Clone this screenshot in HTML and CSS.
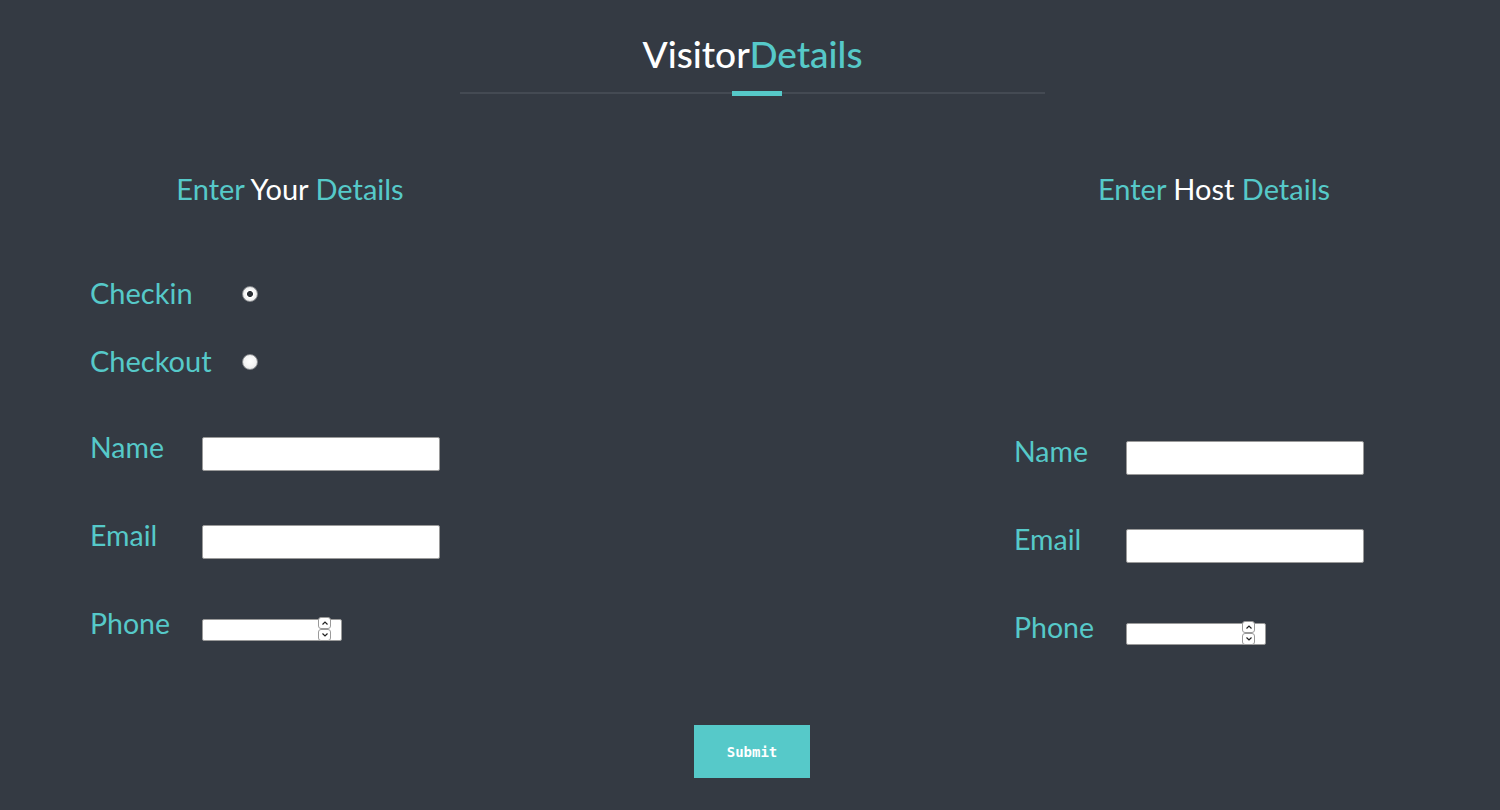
FILE: index.html
```html
<!DOCTYPE html>
<html>
<head>
<meta charset="utf-8">
<title>Visitor Details</title>
<link rel="stylesheet" href="styles.css">
</head>
<body>
<header class="header">
  <h1 class="title"><span class="white">Visitor</span><span class="teal">Details</span></h1>
  <div class="rule"><span class="rule-accent"></span></div>
</header>
<form class="columns">
  <section class="col">
    <h2 class="col-title"><span class="teal">Enter</span> <span class="white">Your</span> <span class="teal">Details</span></h2>
    <div class="radios">
      <label class="radio-row"><span class="radio-label">Checkin</span><input class="radio" type="radio" name="mode" checked></label>
      <label class="radio-row"><span class="radio-label">Checkout</span><input class="radio" type="radio" name="mode"></label>
    </div>
    <div class="fields">
      <div class="field"><span class="field-label">Name</span><input class="text" type="text"></div>
      <div class="field"><span class="field-label">Email</span><input class="text" type="email"></div>
      <div class="field"><span class="field-label">Phone</span><span class="num-wrap"><input class="num" type="number"><span class="spin"><span class="spin-btn"><svg viewBox="0 0 8 6" width="8" height="6"><path d="M1.5 4.5 L4 2 L6.5 4.5" fill="none" stroke="#222" stroke-width="1.2"/></svg></span><span class="spin-btn"><svg viewBox="0 0 8 6" width="8" height="6"><path d="M1.5 1.5 L4 4 L6.5 1.5" fill="none" stroke="#222" stroke-width="1.2"/></svg></span></span></span></div>
    </div>
  </section>
  <section class="col">
    <h2 class="col-title"><span class="teal">Enter</span> <span class="white">Host</span> <span class="teal">Details</span></h2>
    <div class="spacer"></div>
    <div class="fields">
      <div class="field"><span class="field-label">Name</span><input class="text" type="text"></div>
      <div class="field"><span class="field-label">Email</span><input class="text" type="email"></div>
      <div class="field"><span class="field-label">Phone</span><span class="num-wrap"><input class="num" type="number"><span class="spin"><span class="spin-btn"><svg viewBox="0 0 8 6" width="8" height="6"><path d="M1.5 4.5 L4 2 L6.5 4.5" fill="none" stroke="#222" stroke-width="1.2"/></svg></span><span class="spin-btn"><svg viewBox="0 0 8 6" width="8" height="6"><path d="M1.5 1.5 L4 4 L6.5 1.5" fill="none" stroke="#222" stroke-width="1.2"/></svg></span></span></span></div>
    </div>
  </section>
</form>
<div class="actions"><button class="submit" type="button">Submit</button></div>
</body>
</html>
```
FILE: styles.css
```css
html, body { margin: 0; padding: 0; }
body {
  background: #343a43;
  font-family: Lato, "Open Sans", sans-serif;
  width: 1500px;
  height: 810px;
  overflow: hidden;
}
.white { color: #ffffff; }
.teal { color: #56c9c9; }
.header {
  display: flex;
  flex-direction: column;
  align-items: center;
  padding-top: 30px;
  padding-left: 5px;
}
.title {
  margin: 0;
  font-size: 37px;
  font-weight: 500;
  line-height: 48px;
}
.rule {
  margin-top: 14px;
  width: 585px;
  height: 2px;
  background: #444a53;
  display: flex;
  justify-content: center;
  align-items: center;
}
.rule-accent {
  width: 50px;
  height: 5px;
  margin-left: 8px;
  background: #56c9c9;
}
.columns {
  display: flex;
  justify-content: space-between;
  padding: 0 86px 0 90px;
  margin-top: 77px;
}
.col {
  width: 400px;
  display: flex;
  flex-direction: column;
}
.col-title {
  margin: 0;
  text-align: center;
  font-size: 29px;
  font-weight: 400;
  line-height: 36px;
}
.radios {
  margin-top: 67px;
  display: flex;
  flex-direction: column;
  gap: 32px;
}
.spacer { height: 175px; }
.radio-row {
  display: flex;
  align-items: center;
  height: 36px;
  color: #56c9c9;
  font-size: 29px;
}
.radio-label { width: 152px; }
.radio {
  -webkit-appearance: none;
  appearance: none;
  margin: 4px 0 0 0;
  width: 16px;
  height: 16px;
  border-radius: 50%;
  border: 1px solid #8a8d91;
  box-sizing: border-box;
  background: radial-gradient(circle at 50% 45%, #ffffff 0, #f4f4f4 55%, #d6d6d6 100%);
}
.radio:checked {
  background: radial-gradient(circle at 50% 50%, #2b2f35 0, #2b2f35 2.6px, #ffffff 3.4px, #f2f2f2 60%, #d0d0d0 100%);
}
.fields {
  margin-top: 52px;
  display: flex;
  flex-direction: column;
  gap: 54px;
}
.field {
  display: flex;
  align-items: baseline;
  height: 34px;
}
.field-label {
  width: 112px;
  color: #56c9c9;
  font-size: 28.5px;
}
.text {
  width: 238px;
  height: 34px;
  box-sizing: border-box;
  border: 1px solid #9a9a9a;
  border-radius: 2px;
  background: #fff;
  font-size: 13px;
}
.num-wrap {
  position: relative;
  display: inline-block;
}
.num {
  width: 140px;
  height: 22px;
  box-sizing: border-box;
  border: 1px solid #9a9a9a;
  border-radius: 2px;
  background: #fff;
  font-size: 13px;
  -moz-appearance: textfield;
}
.num::-webkit-inner-spin-button,
.num::-webkit-outer-spin-button {
  -webkit-appearance: none;
  margin: 0;
}
.spin {
  position: absolute;
  right: 11px;
  top: -1px;
  display: flex;
  flex-direction: column;
}
.spin-btn {
  width: 13px;
  height: 12px;
  box-sizing: border-box;
  border: 1px solid #9a9a9a;
  border-radius: 3px;
  background: #fff;
  display: flex;
  align-items: center;
  justify-content: center;
}
.actions {
  display: flex;
  justify-content: center;
  margin-top: 81px;
  padding-left: 4px;
}
.submit {
  width: 116px;
  height: 53px;
  border: none;
  background: #56c9c9;
  color: #fff;
  font-family: "DejaVu Sans Mono", monospace;
  font-size: 14px;
  font-weight: 700;
}
```
